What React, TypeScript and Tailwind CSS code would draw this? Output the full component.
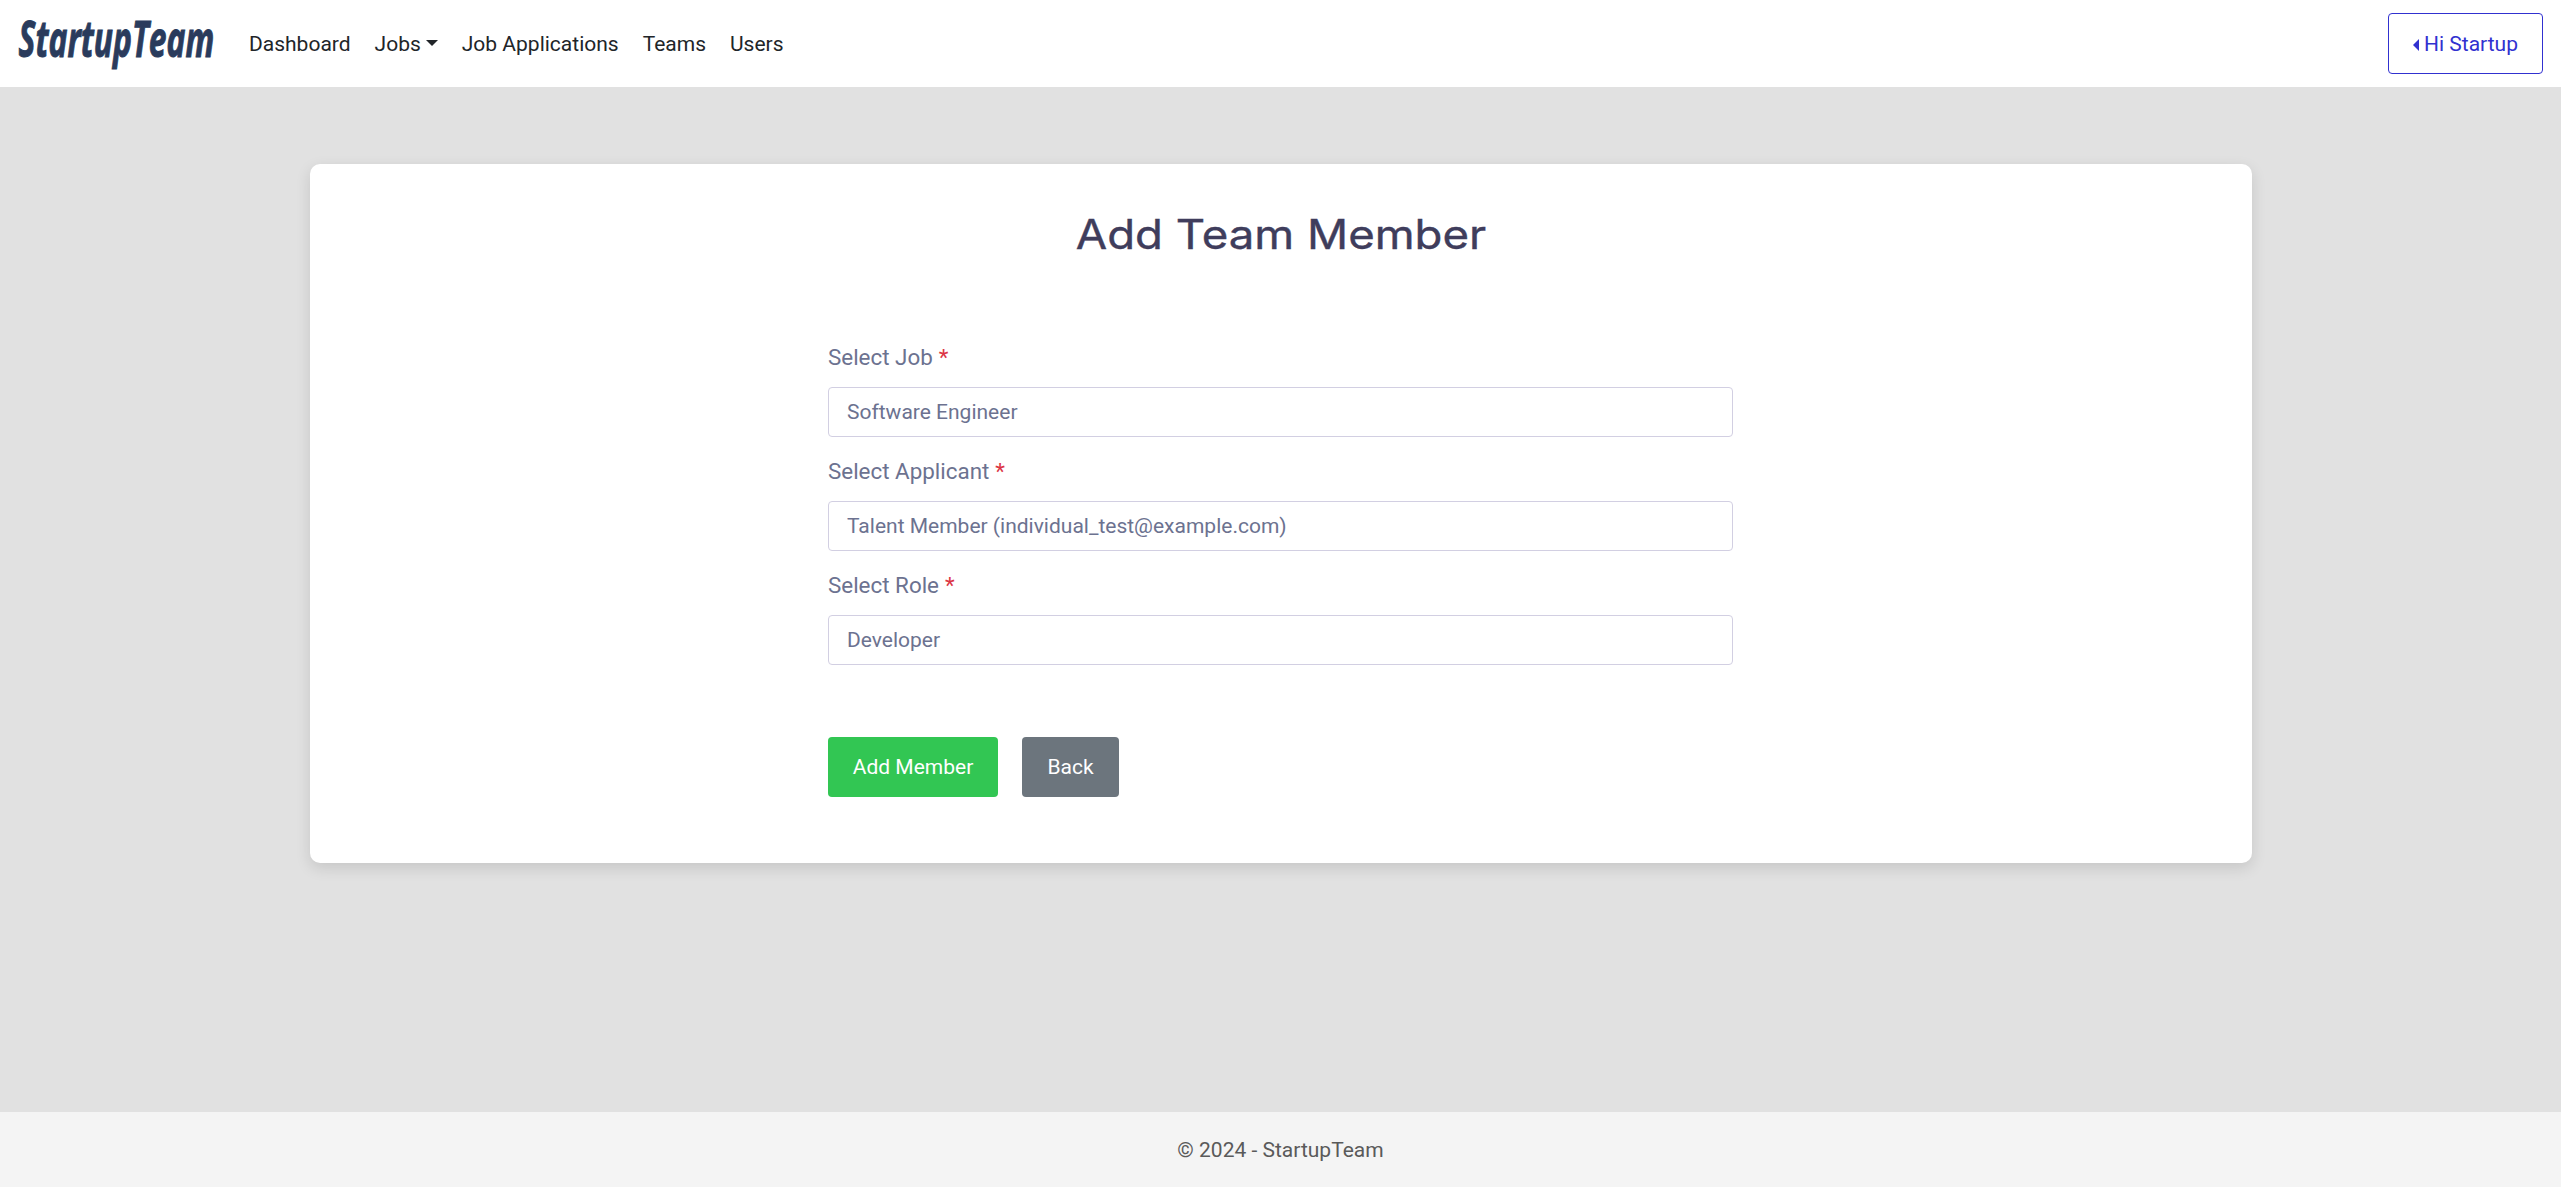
import React from "react";

const navItems = ["Dashboard", "Jobs", "Job Applications", "Teams", "Users"];

const fields = [
  { label: "Select Job", value: "Software Engineer" },
  { label: "Select Applicant", value: "Talent Member (individual_test@example.com)" },
  { label: "Select Role", value: "Developer" },
];

function Logo() {
  return (
    <svg width="200" height="60" viewBox="0 0 200 60" className="shrink-0 overflow-visible" aria-label="StartupTeam">
      <text
        transform="translate(0.6 43.3) scale(0.636 1)"
        fill="#2a3b5c"
        stroke="#2a3b5c"
        strokeWidth="1"
        fontFamily='"Open Sans", sans-serif'
        fontSize="50"
        fontWeight="700"
        fontStyle="italic"
      >
        StartupTeam
      </text>
    </svg>
  );
}

function Header() {
  return (
    <header className="flex h-[87px] items-center bg-white pr-[18px] pl-[18px]">
      <Logo />
      <nav className="ml-[31px] flex gap-[24px] pt-px text-[21px] leading-[30px] text-[#212529]">
        {navItems.map((item) => (
          <a key={item} className="flex items-center whitespace-nowrap">
            {item}
            {item === "Jobs" && (
              <svg width="12" height="6" viewBox="0 0 12 6" className="mb-[2px] ml-[5px]">
                <path d="M0 0H12L6 6Z" fill="#212529" />
              </svg>
            )}
          </a>
        ))}
      </nav>
      <button className="ml-auto flex h-[61px] w-[155px] items-center rounded-[4px] border border-[#3131d0] pl-[24px] text-[21px] text-[#3131d0]">
        <svg width="6" height="12" viewBox="0 0 6 12" className="mt-[2px] mr-[5px]">
          <path d="M6 0V12L0 6Z" fill="#3131d0" />
        </svg>
        <span className="pt-[2px] whitespace-nowrap">Hi Startup</span>
      </button>
    </header>
  );
}

export default function App() {
  return (
    <div className="flex h-[1187px] w-[2561px] flex-col overflow-hidden bg-[#e1e1e1] font-['Roboto',sans-serif]">
      <Header />
      <main className="flex-1 pt-[77px]">
        <section className="mx-auto h-[699px] w-[1942px] rounded-[10px] bg-white pt-[45px] shadow-[0_5px_15px_rgba(0,0,0,0.12)]">
          <h1 className="scale-x-[1.125] text-center font-['Inter',sans-serif] text-[40.5px] leading-[52px] font-normal text-[#3f3d5c] [-webkit-text-stroke:0.4px_#3f3d5c]">
            Add Team Member
          </h1>
          <form className="mx-auto mt-[79px] w-[905px]">
            {fields.map((field) => (
              <div key={field.label} className="mb-[17px]">
                <label className="flex h-[47px] gap-[6px] pt-px text-[22.4px] leading-[33px] text-[#6c7290]">
                  {field.label}
                  <span className="text-[#dc3545]">*</span>
                </label>
                <div className="flex h-[50px] items-center rounded-[4px] border border-[#d2cfe2] px-[18px] pt-px text-[21px] text-[#6c7290]">
                  {field.value}
                </div>
              </div>
            ))}
            <div className="mt-[72px] flex gap-[24px] text-[21px] font-[450] text-white">
              <button type="button" className="h-[60px] w-[170px] rounded-[4px] bg-[#32c653] pt-px">
                Add Member
              </button>
              <button type="button" className="h-[60px] w-[97px] rounded-[4px] bg-[#6c757d] pt-px">
                Back
              </button>
            </div>
          </form>
        </section>
      </main>
      <footer className="flex h-[75px] items-center justify-center bg-[#f4f4f4] pt-[2px] text-[21px] text-[#5a5a5a]">
        © 2024 - StartupTeam
      </footer>
    </div>
  );
}
